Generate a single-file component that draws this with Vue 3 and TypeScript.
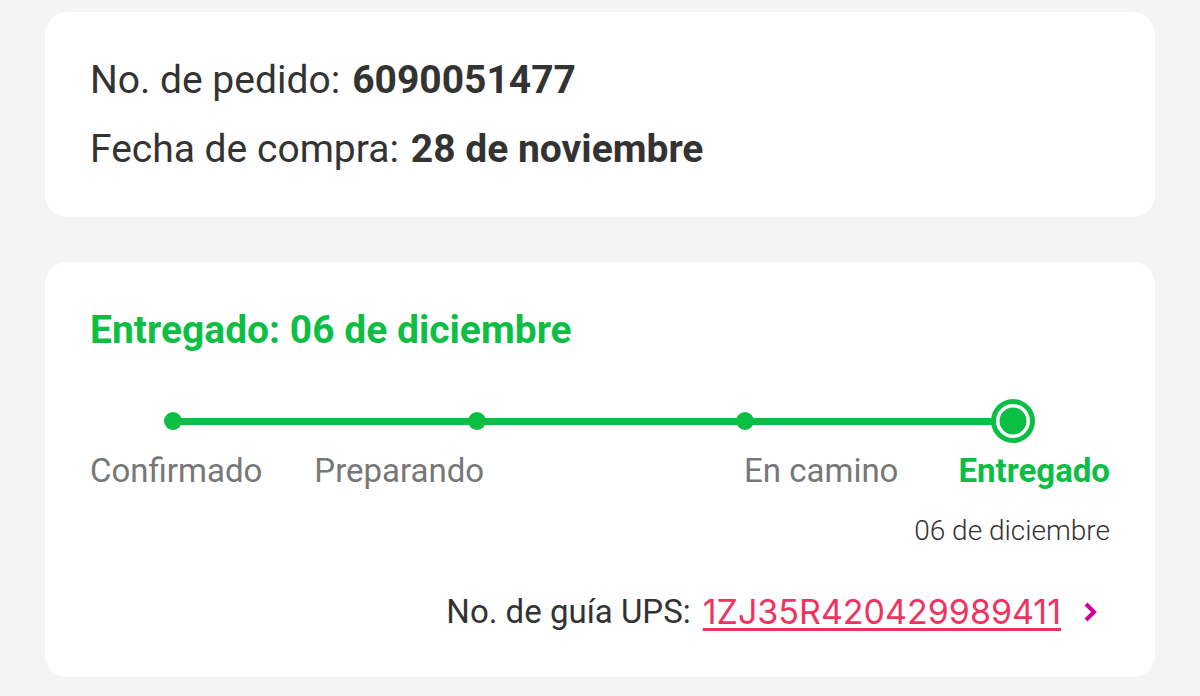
<script setup lang="ts">
interface Step {
  id: string
  label: string
  current: boolean
}

const steps: Step[] = [
  { id: 'confirmed', label: 'Confirmado', current: false },
  { id: 'preparing', label: 'Preparando', current: false },
  { id: 'transit', label: 'En camino', current: false },
  { id: 'delivered', label: 'Entregado', current: true },
]
</script>

<template>
  <main class="page">
    <section class="card summary">
      <p><span>No. de pedido:</span><strong>6090051477</strong></p>
      <p><span>Fecha de compra:</span><strong>28 de noviembre</strong></p>
    </section>

    <section class="card tracking">
      <h2>Entregado: 06 de diciembre</h2>
      <div class="track" aria-hidden="true">
        <span class="dot"></span>
        <span class="line first"></span>
        <span class="dot"></span>
        <span class="line"></span>
        <span class="dot"></span>
        <span class="line last"></span>
        <svg class="ring" viewBox="0 0 44 44">
          <circle cx="22" cy="22" r="22" fill="#0dbe45" />
          <circle cx="22" cy="22" r="17" fill="#fff" />
          <circle cx="22" cy="22" r="13.5" fill="#0dbe45" />
        </svg>
      </div>
      <ol class="labels">
        <li v-for="step in steps" :key="step.id" :class="[step.id, { current: step.current }]">{{ step.label }}</li>
      </ol>
      <p class="date">06 de diciembre</p>
      <p class="guide">
        <span>No. de guía UPS:</span>
        <a href="#">1ZJ35R420429989411</a>
        <svg class="chevron" viewBox="0 0 14 20" aria-hidden="true">
          <path d="M2 2 L10 10 L2 18" />
        </svg>
      </p>
    </section>
  </main>
</template>

<style>
body {
  background: #f4f4f4;
}
</style>

<style scoped>
.page {
  display: flex;
  flex-direction: column;
  gap: 45px;
  padding: 12px 45px 20px;
  font-family: Roboto, "Liberation Sans", sans-serif;
  color: #333;
}
p,
h2,
ol {
  margin: 0;
}
.card {
  background: #fff;
  border-radius: 22px;
  padding: 34px 45px 33px;
}
.summary {
  font-size: 39px;
  line-height: 69px;
}
.summary p {
  display: flex;
  flex-wrap: wrap;
  column-gap: 12px;
}
.tracking {
  padding-bottom: 42px;
}
h2 {
  font-size: 39px;
  line-height: 69px;
  font-weight: 700;
  color: #0dbe45;
}
.track {
  display: flex;
  align-items: center;
  height: 44px;
  margin-top: 34px;
  padding: 0 75px 0 74px;
}
.dot {
  width: 18px;
  height: 18px;
  border-radius: 50%;
  background: #0dbe45;
}
.line {
  flex: 250;
  height: 7px;
  margin: 0 -1px;
  background: #0dbe45;
}
.line.first {
  flex: 286;
}
.line.last {
  flex: 237;
}
.ring {
  width: 44px;
  height: 44px;
}
.labels {
  display: flex;
  padding: 0;
  list-style: none;
  margin-top: 8px;
  font-size: 33px;
  line-height: 40px;
  color: #777;
}
.preparing {
  margin-left: 52px;
}
.transit {
  margin-left: auto;
}
.delivered {
  margin-left: 60px;
}
.current {
  font-weight: 700;
  color: #0dbe45;
}
.date {
  margin-top: 22px;
  text-align: right;
  font-size: 28px;
  line-height: 36px;
  font-weight: 300;
}
.guide {
  display: flex;
  align-items: center;
  justify-content: flex-end;
  margin-top: 40px;
  padding-right: 12px;
  font-size: 33px;
  line-height: 46px;
}
.guide a {
  margin-left: 12px;
  font-family: Inter, Roboto, sans-serif;
  font-size: 34px;
  color: #f0325f;
  text-decoration: underline;
  text-decoration-thickness: 3px;
  text-underline-offset: 4px;
}
.chevron {
  width: 14px;
  height: 20px;
  margin-left: 23px;
  fill: none;
  stroke: #d4009b;
  stroke-width: 4;
}
</style>
